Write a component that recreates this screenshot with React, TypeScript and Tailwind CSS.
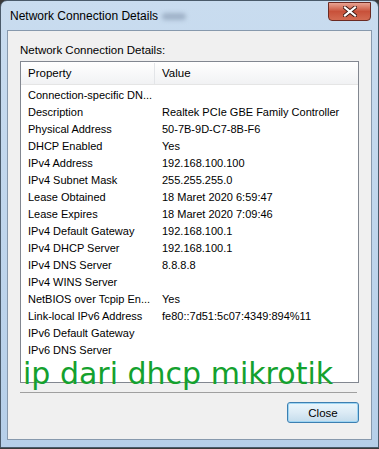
import React from 'react';

const rows: [string, string][] = [
  ['Connection-specific DN...', ''],
  ['Description', 'Realtek PCIe GBE Family Controller'],
  ['Physical Address', '50-7B-9D-C7-8B-F6'],
  ['DHCP Enabled', 'Yes'],
  ['IPv4 Address', '192.168.100.100'],
  ['IPv4 Subnet Mask', '255.255.255.0'],
  ['Lease Obtained', '18 Maret 2020 6:59:47'],
  ['Lease Expires', '18 Maret 2020 7:09:46'],
  ['IPv4 Default Gateway', '192.168.100.1'],
  ['IPv4 DHCP Server', '192.168.100.1'],
  ['IPv4 DNS Server', '8.8.8.8'],
  ['IPv4 WINS Server', ''],
  ['NetBIOS over Tcpip En...', 'Yes'],
  ['Link-local IPv6 Address', 'fe80::7d51:5c07:4349:894%11'],
  ['IPv6 Default Gateway', ''],
  ['IPv6 DNS Server', ''],
];

const App: React.FC = () => {
  return (
    <div
      className="w-[379px] h-[449px] bg-[#3a3a3a] text-[11px] text-black"
      style={{ fontFamily: '"Liberation Sans", Arial, sans-serif' }}
    >
      {/* window frame */}
      <div className="w-[379px] h-[448px] rounded-t-[7px] border border-[#4a5a6a] bg-gradient-to-b from-[#c9dcef] to-[#b6cfe9] flex flex-col">
        {/* title bar */}
        <div className="h-[29px] flex items-start shrink-0">
          <div className="pl-[9px] pt-[7px] flex items-center text-[12px] leading-[16px] text-black">
            Network Connection Details
            <span className="ml-[4px] w-[24px] h-[7px] rounded-full bg-[#9fb2c8] blur-[2px]" />
          </div>
          <div className="ml-auto mr-[7px] mt-[1px] w-[43px] h-[19px] rounded-b-[4px] border border-[#6b2a22] bg-gradient-to-b from-[#e8a393] via-[#c8513a] to-[#d36b52] flex items-center justify-center">
            <svg width="14" height="11" viewBox="0 0 14 11">
              <path d="M2 1.5 L12 9.5 M12 1.5 L2 9.5" stroke="#3b1a14" strokeWidth="4" strokeLinecap="square" />
              <path d="M2 1.5 L12 9.5 M12 1.5 L2 9.5" stroke="#ffffff" strokeWidth="2.2" strokeLinecap="square" />
            </svg>
          </div>
        </div>

        {/* client area */}
        <div className="relative mx-[6px] mb-[7px] flex-1 border border-[#8799ad] bg-[#f0f0f0] flex flex-col px-[12px]">
          <div className="pt-[12px] leading-[15px] text-[11.5px]">Network Connection Details:</div>

          {/* list view */}
          <div className="mt-[3px] h-[322px] border border-[#828790] bg-white flex flex-col">
            <div className="h-[23px] flex bg-gradient-to-b from-white to-[#f1f2f4] border-b border-[#e5e5e5] shrink-0 text-[11.5px] pt-[1px]">
              <div className="w-[134px] pl-[7px] flex items-center border-r border-[#e3e5e8]">Property</div>
              <div className="pl-[7px] flex items-center">Value</div>
            </div>
            <div className="pt-[2px]">
              {rows.map(([k, v]) => (
                <div key={k} className="h-[17px] flex items-center leading-[17px]">
                  <div className="w-[135px] pl-[7px] whitespace-nowrap">{k}</div>
                  <div className="pl-[6px] whitespace-nowrap">{v}</div>
                </div>
              ))}
            </div>
          </div>

          {/* separator */}
          <div className="mt-[9px] h-[1px] bg-[#a0a0a0] mr-[2px]" />

          <div className="flex justify-end mt-[9px]">
            <button className="w-[72px] h-[21px] rounded-[3px] border border-[#3c7fb1] bg-gradient-to-b from-[#eaf6fd] via-[#dcebf5] to-[#c4dcec] shadow-[inset_0_0_0_1px_#9ed5f3] leading-[18px] text-[11.5px]">
              Close
            </button>
          </div>

          {/* watermark over the list */}
          <div
            className="absolute left-[15px] top-[325px] text-[#14a12e] text-[30px] leading-[35px] whitespace-nowrap"
            style={{ fontFamily: '"DejaVu Sans", sans-serif' }}
          >
            ip dari dhcp mikrotik
          </div>
        </div>
      </div>
    </div>
  );
};

export default App;
